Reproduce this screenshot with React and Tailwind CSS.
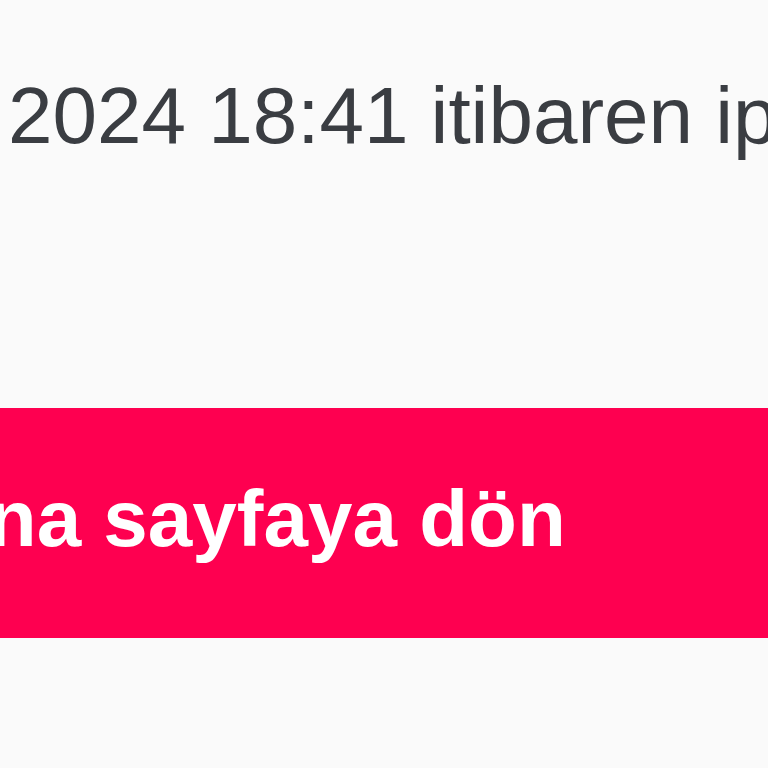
export default function App() {
  return (
    <div
      className="w-[768px] h-[768px] overflow-hidden bg-[#fafafa] flex flex-col"
      style={{ fontFamily: '"Liberation Sans", Arial, sans-serif' }}
    >
      <div className="pt-[68px] pl-[8px] whitespace-nowrap text-[80px] leading-[96px] text-[#3a3d42]">
        2024 18:41 itibaren iptal edildi
      </div>
      <div className="mt-[244px] h-[230px] pb-[8px] bg-[#fe0050] flex items-center whitespace-nowrap">
        <span className="ml-[-70px] text-[80px] font-bold leading-[96px] text-white">
          Ana sayfaya dön
        </span>
      </div>
    </div>
  );
}
